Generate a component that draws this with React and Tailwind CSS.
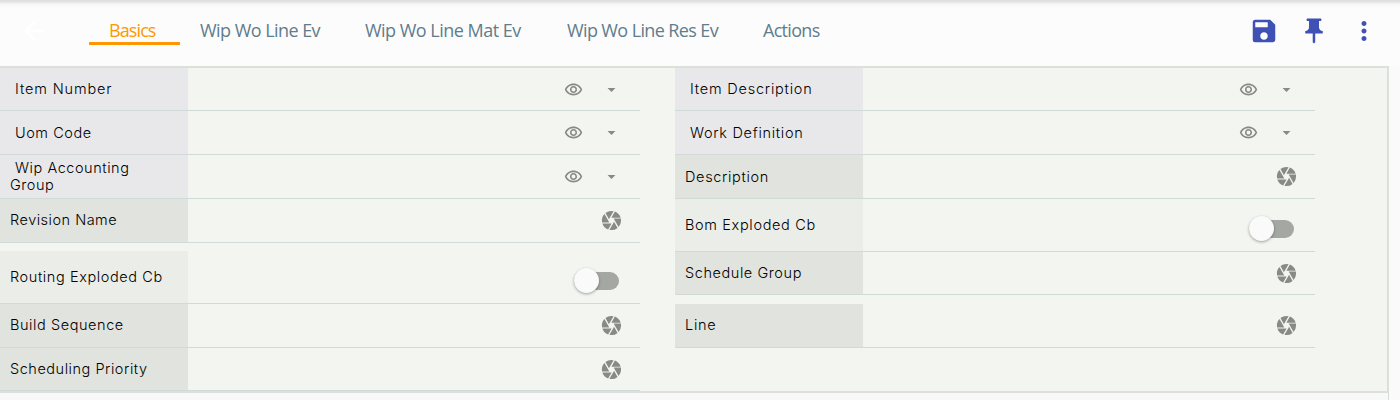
import React from "react";
import {
  MdArrowBack,
  MdSave,
  MdPushPin,
  MdMoreVert,
  MdOutlineRemoveRedEye,
  MdArrowDropDown,
  MdCamera,
} from "react-icons/md";

const TABS = [
  { label: "Wip Wo Line Ev", cls: "w-[165px] tracking-[-0.55px]" },
  { label: "Wip Wo Line Mat Ev", cls: "w-[202px] tracking-[-0.52px]" },
  { label: "Wip Wo Line Res Ev", cls: "w-[196px] tracking-[-0.62px]" },
  { label: "Actions", cls: "w-[80px] tracking-[-0.7px]" },
];

const LEFT = [
  { label: "Item Number", kind: "lookup", h: "h-[43px]", ls: "pb-[2px] tracking-[0.85px]" },
  { label: "Uom Code", kind: "lookup", h: "h-[44px]", ls: "tracking-[0.55px]" },
  { label: "Wip Accounting Group", kind: "lookup", h: "h-[44px]", ls: "pb-[2px] tracking-[0.55px]" },
  { label: "Revision Name", kind: "text", h: "h-[44px]", ls: "pb-[2px] tracking-[0.5px]" },
  { label: "Routing Exploded Cb", kind: "switch", h: "h-[53px] mt-[8px]", ls: "pb-[2px] tracking-[0.6px]" },
  { label: "Build Sequence", kind: "text", h: "h-[44px]", ls: "pb-[2px] tracking-[0.57px]" },
  { label: "Scheduling Priority", kind: "text", h: "h-[43px]", ls: "pb-[2px] tracking-[0.53px]" },
];

const RIGHT = [
  { label: "Item Description", kind: "lookup", h: "h-[43px]", ls: "pb-[2px] tracking-[0.77px]" },
  { label: "Work Definition", kind: "lookup", h: "h-[44px]", ls: "tracking-[0.7px]" },
  { label: "Description", kind: "text", h: "h-[44px]", ls: "tracking-[0.65px]" },
  { label: "Bom Exploded Cb", kind: "switch", h: "h-[53px]", ls: "pb-[2px] tracking-[0.65px]" },
  { label: "Schedule Group", kind: "text", h: "h-[43px]", ls: "pb-[2px] tracking-[0.57px]" },
  { label: "Line", kind: "text", h: "h-[44px] mt-[9px]", ls: "pb-[2px] tracking-[0.7px]" },
];

const LABEL_BG = {
  lookup: "bg-[#e8e8eb] indent-[5px]",
  text: "bg-[#e1e3de]",
  switch: "bg-[#ebede8]",
};

function Control({ kind }) {
  if (kind === "lookup") {
    return (
      <div className="flex items-center gap-[19px] pr-[19px] text-[#888a85]">
        <MdOutlineRemoveRedEye size={19} />
        <MdArrowDropDown size={19} />
      </div>
    );
  }
  if (kind === "switch") {
    return (
      <div className="mt-[7px] mr-[21px] flex h-[18px] w-[45px] items-center rounded-full bg-[#a5a8a2]">
        <div className="h-[25px] w-[25px] shrink-0 rounded-full bg-[#fafafa] shadow-[0_1px_3px_rgba(0,0,0,0.35)]" />
      </div>
    );
  }
  return (
    <div className="pr-[17px] text-[#888a85]">
      <MdCamera size={23} />
    </div>
  );
}

function Row({ label, kind, h, ls }) {
  return (
    <div className={`flex w-[640px] shrink-0 border-b border-[#cfdad9] ${h}`}>
      <div
        className={`flex w-[188px] shrink-0 items-center pr-[20px] pl-[10px] text-[14.5px] leading-[17px] font-light text-black ${LABEL_BG[kind]} ${ls}`}
      >
        <span>{label}</span>
      </div>
      <div className="flex flex-1 items-center justify-end">
        <Control kind={kind} />
      </div>
    </div>
  );
}

export default function App() {
  return (
    <div className="flex h-[400px] w-[1400px] flex-col overflow-hidden bg-[#fafafa] font-['Inter',sans-serif]">
      <header className="flex h-[66px] shrink-0 items-start bg-[linear-gradient(to_bottom,#dedede_0px,#e4e4e4_2px,#f5f5f5_4px,#fcfcfc_8px)] font-['Open_Sans',sans-serif] text-[18px] leading-[24px] text-[#5f7d8c]">
        <div className="w-[89px] pt-[16px] pl-[19px] text-white">
          <MdArrowBack size={30} />
        </div>
        <div className="mr-[20px] h-[45px] w-[91px] border-b-[3px] border-[#ff9800] pt-[18px] pl-[20px] tracking-[-0.9px] text-[#ff9800]">
          Basics
        </div>
        {TABS.map((t) => (
          <div key={t.label} className={`shrink-0 pt-[18px] whitespace-nowrap ${t.cls}`}>
            {t.label}
          </div>
        ))}
        <div className="ml-auto flex gap-[20px] pt-[16px] pr-[21px] text-[#3f51b5]">
          <MdSave size={30} />
          <MdPushPin size={30} />
          <MdMoreVert size={30} />
        </div>
      </header>
      <main className="flex h-[327px] w-[1389px] shrink-0 gap-[35px] border-t-2 border-r-2 border-b-2 border-[#dcdfda] bg-[#f3f5f0]">
        <div className="flex flex-col">
          {LEFT.map((r) => (
            <Row key={r.label} {...r} />
          ))}
        </div>
        <div className="flex flex-col">
          {RIGHT.map((r) => (
            <Row key={r.label} {...r} />
          ))}
        </div>
      </main>
      <div className="h-[7px] w-[1389px] border-r border-[#d8dbd7] bg-[#f8f8f8]" />
    </div>
  );
}
